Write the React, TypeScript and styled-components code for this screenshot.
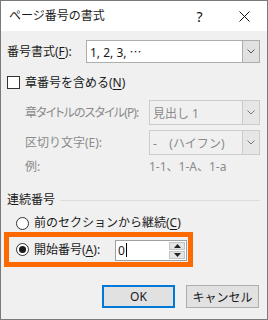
import * as React from 'react';
import styled, { createGlobalStyle } from 'styled-components';

const GlobalStyle = createGlobalStyle`
    html, body {
        margin: 0;
        padding: 0;
        background: #ffffff;
    }
    * {
        box-sizing: border-box;
    }
`;

const FONT = `"Noto Sans", "Noto Sans CJK JP", sans-serif`;

const Window = styled.div`
    width: 268px;
    height: 320px;
    border: 1px solid #7a7a7a;
    background: #f0f0f0;
    display: flex;
    flex-direction: column;
    font-family: ${FONT};
    font-size: 12px;
    color: #1a1a1a;
`;

const TitleBar = styled.div`
    height: 30px;
    background: #ffffff;
    display: flex;
    align-items: center;
    padding-left: 8px;
    flex-shrink: 0;
`;

const Title = styled.div`
    flex: 1;
    line-height: 14px;
`;

const TitleButton = styled.div`
    width: 45px;
    height: 30px;
    display: flex;
    align-items: center;
    justify-content: center;
    font-size: 14px;
    color: #111;
`;

const Body = styled.div`
    display: flex;
    flex-direction: column;
    padding: 0 7px 0 6px;
`;

interface RowParams {
    top: number;
    height: number;
    indent?: number;
}

const Row = styled.div<RowParams>`
    display: flex;
    align-items: center;
    margin-top: ${props => props.top}px;
    height: ${props => props.height}px;
    padding-left: ${props => props.indent || 0}px;
`;

interface LabelParams {
    width?: number;
    disabled?: boolean;
    tight?: boolean;
}

const Label = styled.div<LabelParams>`
    width: ${props => (props.width ? props.width + 'px' : 'auto')};
    flex-shrink: 0;
    color: ${props => (props.disabled ? '#8a8a8a' : '#1a1a1a')};
    white-space: nowrap;
    line-height: 14px;
    font-feature-settings: ${props => (props.tight ? '"palt"' : 'normal')};
    letter-spacing: ${props => (props.tight ? '-0.9px' : 'normal')};
`;

const Key = styled.span`
    text-decoration: underline;
    text-underline-offset: 2px;
`;

interface SelectParams {
    disabled?: boolean;
}

const Select = styled.div<SelectParams>`
    flex: 1;
    height: 100%;
    display: flex;
    border: 1px solid ${props => (props.disabled ? '#cccccc' : '#adadad')};
    background: ${props => (props.disabled ? '#f0f0f0' : '#ffffff')};
`;

const SelectValue = styled.div<SelectParams>`
    flex: 1;
    display: flex;
    align-items: center;
    padding-left: 3px;
    color: ${props => (props.disabled ? '#8a8a8a' : '#1a1a1a')};
    white-space: nowrap;
`;

const DropButton = styled.div<SelectParams>`
    width: 17px;
    display: flex;
    align-items: center;
    justify-content: center;
    background: ${props => (props.disabled ? '#e6e6e6' : '#e1e1e1')};
    border-left: 1px solid ${props => (props.disabled ? '#cccccc' : '#adadad')};
`;

const CheckBox = styled.div`
    width: 13px;
    height: 13px;
    border: 1px solid #333333;
    background: #ffffff;
    margin-right: 5px;
    flex-shrink: 0;
`;

const GroupLine = styled.div`
    flex: 1;
    height: 1px;
    background: #dcdcdc;
    margin-left: 5px;
    margin-top: 1px;
`;

const Radio = styled.div<{ checked?: boolean }>`
    width: 13px;
    height: 13px;
    border-radius: 50%;
    border: 1px solid #333333;
    background: #ffffff;
    margin-right: 5px;
    flex-shrink: 0;
    display: flex;
    align-items: center;
    justify-content: center;
    &::after {
        content: '';
        display: ${props => (props.checked ? 'block' : 'none')};
        width: 7px;
        height: 7px;
        border-radius: 50%;
        background: #1a1a1a;
    }
`;

const Highlight = styled.div`
    margin-top: 2px;
    margin-left: -3px;
    width: 189px;
    height: 35px;
    border: 5px solid #ff6a00;
    display: flex;
    align-items: center;
    padding-left: 7px;
`;

const Spin = styled.div`
    width: 72px;
    height: 21px;
    margin-left: auto;
    margin-right: 1px;
    margin-top: 1px;
    display: flex;
    border: 1px solid #a0a0a0;
    background: #ffffff;
`;

const SpinValue = styled.div`
    flex: 1;
    display: flex;
    align-items: center;
    padding-left: 2px;
    &::after {
        content: '';
        width: 1px;
        height: 14px;
        background: #000;
        margin-left: 1px;
    }
`;

const SpinButtons = styled.div`
    width: 17px;
    display: flex;
    flex-direction: column;
    gap: 1px;
    padding: 1px 1px 1px 0;
`;

const SpinButton = styled.div`
    flex: 1;
    display: flex;
    align-items: center;
    justify-content: center;
    background: #e5e5e5;
    border: 1px solid #c4c4c4;
`;

const ButtonRow = styled.div`
    display: flex;
    justify-content: flex-end;
    gap: 11px;
    margin-top: 18px;
    margin-right: 1px;
`;

const Button = styled.div<{ primary?: boolean }>`
    width: 73px;
    height: 23px;
    display: flex;
    align-items: center;
    justify-content: center;
    background: #e1e1e1;
    border: ${props => (props.primary ? '2px solid #0078d7' : '1px solid #adadad')};
`;

const Chevron = ({ color }: { color: string }) => (
    <svg width="8" height="5" viewBox="0 0 8 5">
        <path d="M0.5 0.5 L4 4 L7.5 0.5" fill="none" stroke={color} strokeWidth="1" />
    </svg>
);

const Arrow = ({ up }: { up?: boolean }) => (
    <svg width="7" height="4" viewBox="0 0 7 4">
        <path d={up ? 'M0 4 L3.5 0 L7 4 Z' : 'M0 0 L3.5 4 L7 0 Z'} fill="#222" />
    </svg>
);

const App = () => (
    <Window>
        <GlobalStyle />
        <TitleBar>
            <Title>ページ番号の書式</Title>
            <TitleButton>?</TitleButton>
            <TitleButton>
                <svg width="11" height="11" viewBox="0 0 11 11">
                    <path d="M0.5 0.5 L10.5 10.5 M10.5 0.5 L0.5 10.5" stroke="#111" strokeWidth="1" />
                </svg>
            </TitleButton>
        </TitleBar>
        <Body>
            <Row top={9} height={23}>
                <Label width={79}>番号書式(<Key>F</Key>):</Label>
                <Select>
                    <SelectValue>1, 2, 3, ⋯</SelectValue>
                    <DropButton><Chevron color="#555" /></DropButton>
                </Select>
            </Row>
            <Row top={13} height={13}>
                <CheckBox />
                <Label>章番号を含める(<Key>N</Key>)</Label>
            </Row>
            <Row top={11} height={25} indent={18}>
                <Label width={124} disabled tight>章タイトルのスタイル(P):</Label>
                <Select disabled>
                    <SelectValue disabled>見出し 1</SelectValue>
                    <DropButton disabled><Chevron color="#777" /></DropButton>
                </Select>
            </Row>
            <Row top={5} height={25} indent={18}>
                <Label width={124} disabled>区切り文字(E):</Label>
                <Select disabled>
                    <SelectValue disabled>-&nbsp;&nbsp;&nbsp;&nbsp;(ハイフン)</SelectValue>
                    <DropButton disabled><Chevron color="#777" /></DropButton>
                </Select>
            </Row>
            <Row top={5} height={14} indent={18}>
                <Label width={124} disabled>例:</Label>
                <Label disabled>1-1、1-A、1-a</Label>
            </Row>
            <Row top={19} height={14}>
                <Label>連続番号</Label>
                <GroupLine />
            </Row>
            <Row top={9} height={14} indent={9}>
                <Radio />
                <Label>前のセクションから継続(<Key>C</Key>)</Label>
            </Row>
            <Highlight>
                <Radio checked />
                <Label>開始番号(<Key>A</Key>):</Label>
                <Spin>
                    <SpinValue>0</SpinValue>
                    <SpinButtons>
                        <SpinButton><Arrow up /></SpinButton>
                        <SpinButton><Arrow /></SpinButton>
                    </SpinButtons>
                </Spin>
            </Highlight>
            <ButtonRow>
                <Button primary>OK</Button>
                <Button>キャンセル</Button>
            </ButtonRow>
        </Body>
    </Window>
);

export default App;
